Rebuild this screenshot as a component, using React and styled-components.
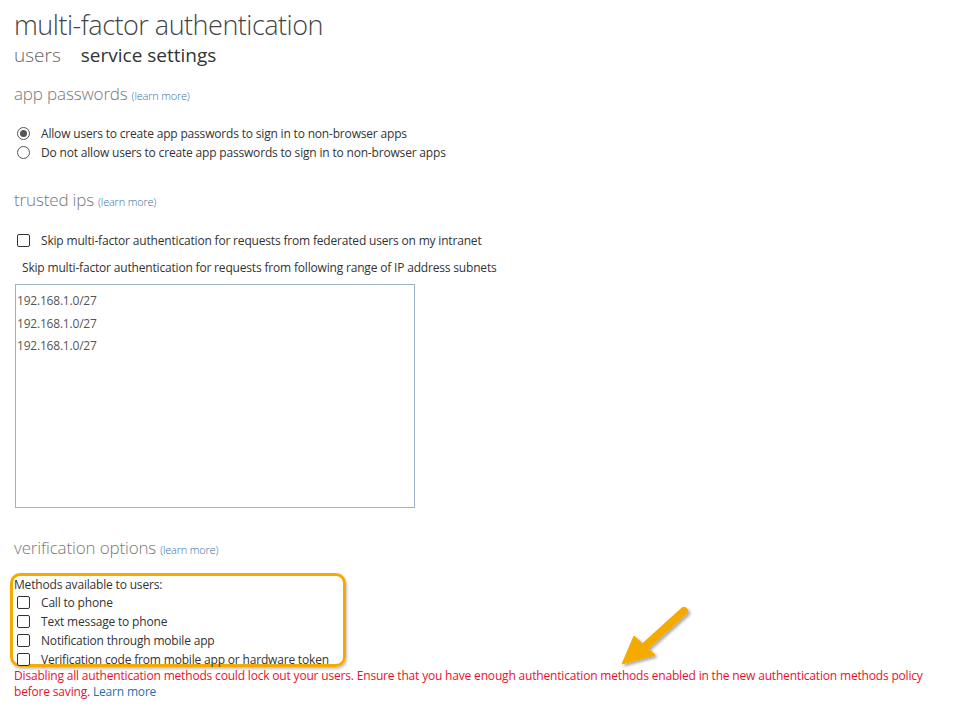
import { createGlobalStyle, styled } from 'styled-components';

const Global = createGlobalStyle`
  body {
    margin: 0;
    background: #fff;
    font-family: "Open Sans", "Noto Sans", sans-serif;
    color: #333;
  }
`;

const Page = styled.div`
  position: relative;
  padding: 8px 0 0 14px;
  width: 944px;
  height: 702px;
`;

const Title = styled.h1`
  margin: 0;
  font-size: 27px;
  font-weight: 300;
  line-height: 34px;
  color: #444;
  letter-spacing: -0.5px;
`;

const Tabs = styled.div`
  display: flex;
  gap: 20px;
`;

const Tab = styled.span`
  font-size: 19px;
  line-height: 26px;
  font-weight: ${(p) => (p.$active ? 400 : 300)};
  color: ${(p) => (p.$active ? '#333' : '#666')};
`;

const SectionTitle = styled.h2`
  margin: ${(p) => p.$top || 0}px 0 0;
  font-size: 17px;
  font-weight: 300;
  line-height: 24px;
  color: #777;
  letter-spacing: -0.15px;
`;

const Learn = styled.a`
  font-size: 11px;
  color: #3a6f9f;
  margin-left: 4px;
  letter-spacing: -0.2px;
  text-decoration: none;
`;

const OptionList = styled.div`
  display: flex;
  flex-direction: column;
  margin: ${(p) => p.$top || 0}px 0 0 ${(p) => p.$left || 0}px;
`;

const Option = styled.label`
  display: flex;
  align-items: center;
  gap: 11px;
  height: 19px;
  font-size: 12px;
  letter-spacing: -0.18px;
  color: #333;
`;

const Radio = styled.input.attrs({ type: 'radio' })`
  appearance: none;
  margin: 0;
  width: 13px;
  height: 13px;
  border: 1px solid #555;
  border-radius: 50%;
  background: #fff;
  position: relative;
  &:checked::after {
    content: '';
    position: absolute;
    left: 2px;
    top: 2px;
    width: 7px;
    height: 7px;
    border-radius: 50%;
    background: #555;
  }
`;

const Check = styled.input.attrs({ type: 'checkbox' })`
  appearance: none;
  margin: 0;
  width: 13px;
  height: 13px;
  border: 1px solid #333;
  border-radius: 2px;
  background: #fff;
`;

const Note = styled.p`
  margin: ${(p) => p.$top || 0}px 0 0 8px;
  font-size: 12px;
  line-height: 18px;
  letter-spacing: -0.18px;
  color: #333;
`;

const IpBox = styled.textarea`
  display: block;
  box-sizing: border-box;
  margin: 7px 0 0 1px;
  width: 400px;
  height: 224px;
  padding: 5px 0 0 1px;
  border: 1px solid #9fb3c8;
  font-family: inherit;
  font-size: 12px;
  line-height: 22.5px;
  letter-spacing: -0.2px;
  color: #555;
  resize: none;
  outline: none;
`;

const Highlight = styled.div`
  box-sizing: border-box;
  width: 336px;
  height: 94px;
  margin: 11px 0 0 -4px;
  padding: 0 0 0 1px;
  border: 3px solid #f5aa00;
  border-radius: 10px;
  box-shadow: 1px 2px 3px rgba(0, 0, 0, 0.25);
`;

const MethodsLabel = styled.div`
  font-size: 12px;
  line-height: 17px;
  letter-spacing: -0.18px;
  color: #333;
`;

const Warning = styled.p`
  margin: 1px 0 0;
  width: 922px;
  font-size: 12px;
  line-height: 15.5px;
  letter-spacing: -0.18px;
  color: #e8112d;
`;

const WarnLink = styled.a`
  color: #1f6fb2;
  text-decoration: none;
`;

const Arrow = styled.svg`
  position: absolute;
  left: 612px;
  top: 600px;
  overflow: visible;
`;

const methods = [
  'Call to phone',
  'Text message to phone',
  'Notification through mobile app',
  'Verification code from mobile app or hardware token',
];

export default function App() {
  return (
    <>
      <Global />
      <Page>
        <Title>multi-factor authentication</Title>
        <Tabs>
          <Tab>users</Tab>
          <Tab $active>service settings</Tab>
        </Tabs>

        <SectionTitle $top={14}>
          app passwords<Learn href="#">(learn more)</Learn>
        </SectionTitle>
        <OptionList $top={16} $left={3}>
          <Option>
            <Radio name="pw" defaultChecked />
            Allow users to create app passwords to sign in to non-browser apps
          </Option>
          <Option>
            <Radio name="pw" />
            Do not allow users to create app passwords to sign in to non-browser apps
          </Option>
        </OptionList>

        <SectionTitle $top={26}>
          trusted ips<Learn href="#">(learn more)</Learn>
        </SectionTitle>
        <OptionList $top={17} $left={3}>
          <Option>
            <Check />
            Skip multi-factor authentication for requests from federated users on my intranet
          </Option>
        </OptionList>
        <Note $top={9}>
          Skip multi-factor authentication for requests from following range of IP address subnets
        </Note>
        <IpBox defaultValue={'192.168.1.0/27\n192.168.1.0/27\n192.168.1.0/27'} />

        <SectionTitle $top={28}>
          verification options<Learn href="#">(learn more)</Learn>
        </SectionTitle>
        <Highlight>
          <MethodsLabel>Methods available to users:</MethodsLabel>
          <OptionList $left={3}>
            {methods.map((m) => (
              <Option key={m}>
                <Check />
                {m}
              </Option>
            ))}
          </OptionList>
        </Highlight>
        <Warning>
          Disabling all authentication methods could lock out your users. Ensure that you have enough
          authentication methods enabled in the new authentication methods policy before saving.{' '}
          <WarnLink href="#">Learn more</WarnLink>
        </Warning>

        <Arrow width="80" height="70" viewBox="0 0 80 70">
          <defs>
            <filter id="sh" x="-30%" y="-30%" width="160%" height="160%">
              <feDropShadow dx="2" dy="2" stdDeviation="1.5" floodColor="#000" floodOpacity="0.35" />
            </filter>
          </defs>
          <g filter="url(#sh)" fill="#f5aa00" stroke="#f5aa00">
            <line x1="72" y1="11" x2="30" y2="49" strokeWidth="8" strokeLinecap="round" />
            <polygon points="10,64 22,36 43,55" strokeWidth="1" strokeLinejoin="round" />
          </g>
        </Arrow>
      </Page>
    </>
  );
}
